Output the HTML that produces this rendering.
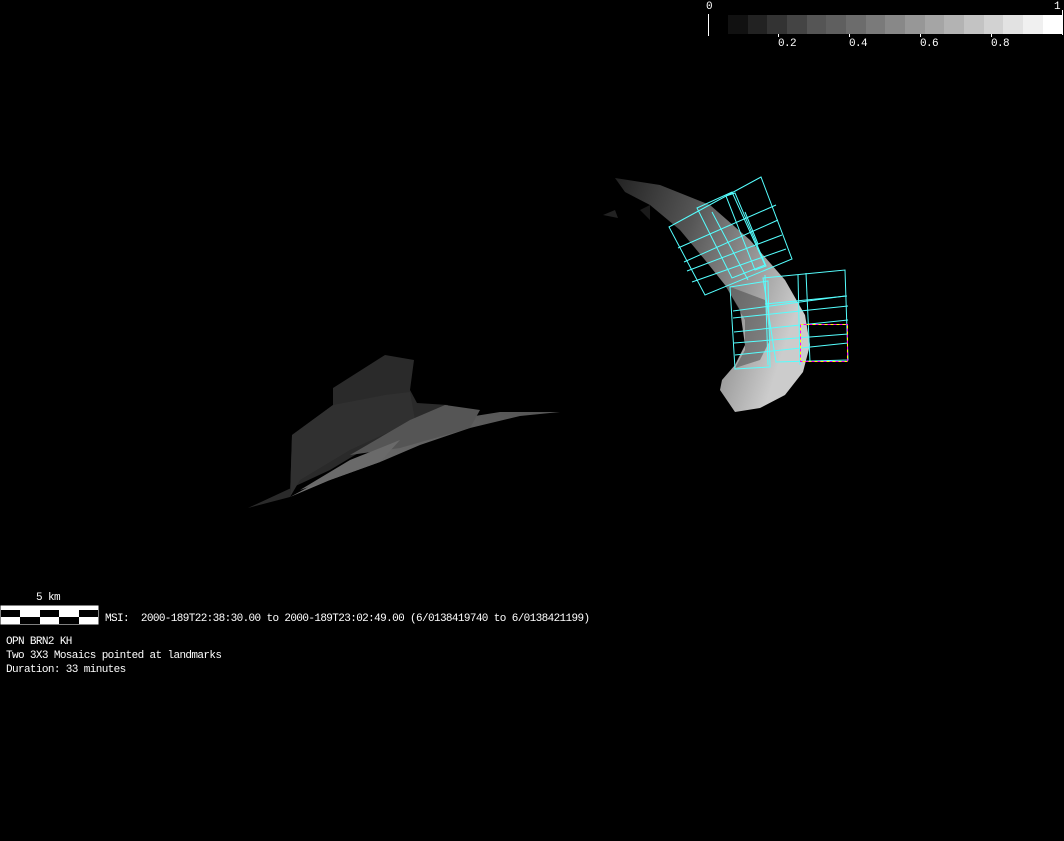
<!DOCTYPE html>
<html><head><style>
body{margin:0;background:#000;width:1064px;height:841px;overflow:hidden;position:relative;font-family:"Liberation Mono","DejaVu Sans Mono",monospace;color:#fff}
.t{position:absolute;font-size:11px;line-height:14px;white-space:pre;letter-spacing:-0.62px}
</style></head><body>
<svg width="1064" height="841" style="position:absolute;left:0;top:0">
<defs>
<linearGradient id="cg" x1="0" y1="0" x2="1" y2="0.4">
<stop offset="0" stop-color="#222"/><stop offset="0.4" stop-color="#555"/><stop offset="0.75" stop-color="#999"/><stop offset="1" stop-color="#ccc"/></linearGradient>
<linearGradient id="lg" x1="0" y1="1" x2="1" y2="0">
<stop offset="0" stop-color="#777"/><stop offset="1" stop-color="#555"/></linearGradient>
</defs>
<g>
<rect x="728" y="15" width="20" height="19" fill="#111"/><rect x="748" y="15" width="20" height="19" fill="#222"/><rect x="767" y="15" width="20" height="19" fill="#333"/><rect x="787" y="15" width="20" height="19" fill="#444"/><rect x="807" y="15" width="20" height="19" fill="#555"/><rect x="826" y="15" width="20" height="19" fill="#5f5f5f"/><rect x="846" y="15" width="20" height="19" fill="#6c6c6c"/><rect x="866" y="15" width="20" height="19" fill="#7a7a7a"/><rect x="885" y="15" width="20" height="19" fill="#888"/><rect x="905" y="15" width="20" height="19" fill="#979797"/><rect x="925" y="15" width="20" height="19" fill="#a5a5a5"/><rect x="944" y="15" width="20" height="19" fill="#b3b3b3"/><rect x="964" y="15" width="20" height="19" fill="#c3c3c3"/><rect x="984" y="15" width="20" height="19" fill="#d2d2d2"/><rect x="1003" y="15" width="20" height="19" fill="#e2e2e2"/><rect x="1023" y="15" width="20" height="19" fill="#f0f0f0"/><rect x="1043" y="15" width="20" height="19" fill="#fff"/>
<line x1="708.5" y1="14" x2="708.5" y2="36" stroke="#fff"/>
<line x1="1062.5" y1="10" x2="1062.5" y2="35" stroke="#fff"/>
<line x1="778.5" y1="34" x2="778.5" y2="37" stroke="#fff"/><line x1="849.5" y1="34" x2="849.5" y2="37" stroke="#fff"/><line x1="920.5" y1="34" x2="920.5" y2="37" stroke="#fff"/><line x1="991.5" y1="34" x2="991.5" y2="37" stroke="#fff"/>
</g>
<polygon points="248,508 290,497 292,435 333,405 333,388 385,355 414,360 410,390 417,403 448,405 445,412 380,440 330,470" fill="#2a2a2a"/>
<polygon points="292,435 333,405 385,395 410,392 415,420 350,450 300,480 290,497" fill="#303030"/>
<polygon points="258,505 290,497 340,470 400,445 450,420 500,412 560,412 520,416 470,428 420,445 380,462 330,480 290,497" fill="url(#lg)"/>
<polygon points="350,455 410,420 445,405 480,410 470,428 400,448" fill="#555"/>
<polygon points="300,490 350,460 400,440 380,462 330,480" fill="#6a6a6a"/>
<path d="M615,178 L660,185 L710,205 L750,240 L785,280 L805,315 L810,345 L803,372 L785,395 L760,408 L735,412 L720,390 L722,380 L735,365 L745,345 L740,310 L725,285 L705,260 L680,230 L650,205 L625,192 Z" fill="url(#cg)"/>
<polygon points="725,285 745,320 745,350 735,368 760,360 770,340 765,300" fill="#444" opacity="0.5"/>
<polygon points="603,215 615,210 618,218" fill="#222"/>
<polygon points="640,210 650,205 650,220" fill="#1a1a1a"/>
<g fill="none" stroke="#5ff" stroke-width="1">
<polygon points="669,227 761,177 792,259 705,295"/>
<polygon points="697,208 732,192 765,265 732,278"/>
<polygon points="726,196 735,193 766,266 755,270"/>
<line x1="678" y1="248" x2="776" y2="205"/><line x1="684" y1="262" x2="778" y2="220"/>
<line x1="687" y1="271" x2="782" y2="235"/><line x1="692" y1="282" x2="786" y2="249"/>
<line x1="712" y1="212" x2="748" y2="280"/><line x1="745" y1="212" x2="758" y2="244"/>
<polygon points="730,287 768,281 770,367 735,369"/>
<polygon points="763,278 845,270 848,360 776,362"/>
<line x1="765" y1="275" x2="768" y2="365"/><line x1="798" y1="275" x2="800" y2="365"/><line x1="806" y1="273" x2="810" y2="362"/>
<line x1="733" y1="311" x2="845" y2="296"/><line x1="733" y1="318" x2="848" y2="306"/>
<line x1="734" y1="332" x2="848" y2="320"/><line x1="734" y1="343" x2="848" y2="334"/>
<line x1="735" y1="355" x2="848" y2="343"/><line x1="765" y1="304" x2="847" y2="296"/>
</g>
<rect x="800.5" y="324.5" width="47" height="37" fill="none" stroke="#ff0" stroke-dasharray="3,3"/>
<rect x="800.5" y="324.5" width="47" height="37" fill="none" stroke="#f0f" stroke-dasharray="3,3" stroke-dashoffset="3"/>
<rect x="0.5" y="605.5" width="98" height="19" fill="#fff"/>
<g fill="#000">
<rect x="1" y="610" width="19" height="7"/><rect x="40" y="610" width="19" height="7"/><rect x="79" y="610" width="19" height="7"/>
<rect x="20" y="617" width="20" height="7"/><rect x="59" y="617" width="20" height="7"/>
</g>
</svg>
<div class="t" style="left:706px;top:0px">0</div>
<div class="t" style="left:1054px;top:0px">1</div>
<div class="t" style="left:778px;top:37px">0.2</div>
<div class="t" style="left:849px;top:37px">0.4</div>
<div class="t" style="left:920px;top:37px">0.6</div>
<div class="t" style="left:991px;top:37px">0.8</div>
<div class="t" style="left:36px;top:591px">5 km</div>
<div class="t" style="left:105px;top:612px">MSI:  2000-189T22:38:30.00 to 2000-189T23:02:49.00 (6/0138419740 to 6/0138421199)</div>
<div class="t" style="left:6px;top:635px">OPN BRN2 KH
Two 3X3 Mosaics pointed at landmarks
Duration: 33 minutes</div>
</body></html>
